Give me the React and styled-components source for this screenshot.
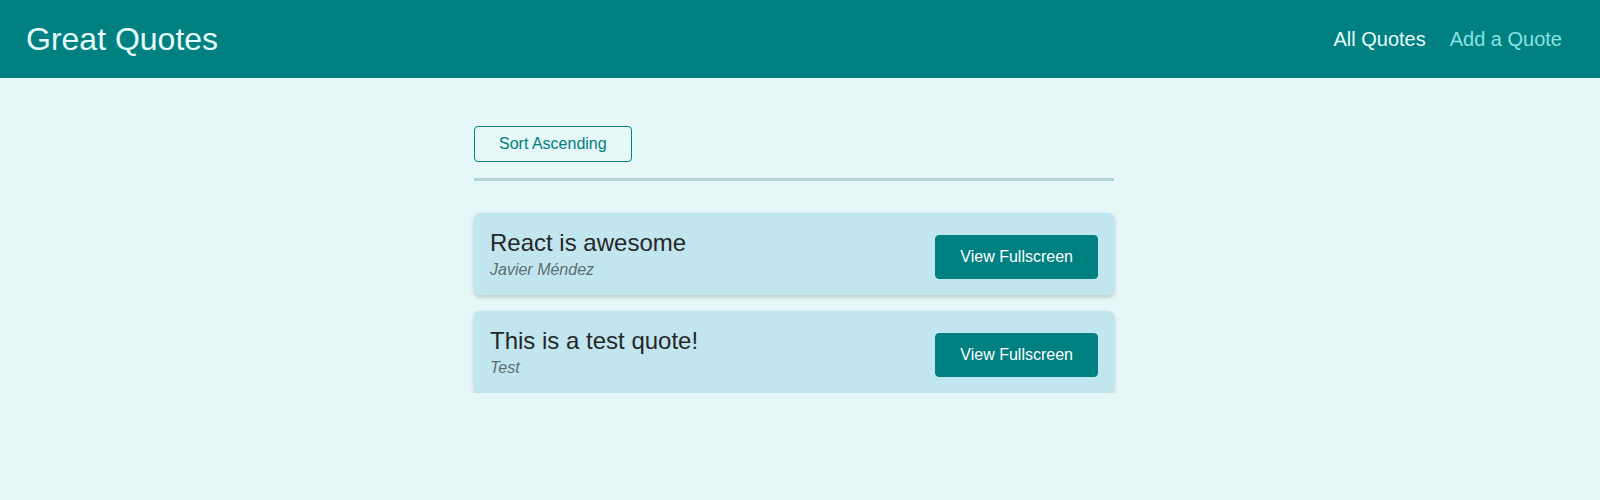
import React from 'react'
import styled, { createGlobalStyle } from 'styled-components'

const GlobalStyle = createGlobalStyle`
  * {
    box-sizing: border-box;
  }
  body {
    margin: 0;
    font-family: "Liberation Sans", Arial, sans-serif;
    background-color: #e6f7f7;
  }
`

const Header = styled.header`
  height: 78px;
  display: flex;
  align-items: center;
  justify-content: space-between;
  padding: 0 38px 0 26px;
  background-color: #008080;
`
const Logo = styled.div`
  font-size: 32px;
  color: #e6fcfc;
`
const NavList = styled.ul`
  list-style: none;
  margin: 0;
  padding: 0;
  display: flex;
  align-items: center;
  gap: 24px;
`
const NavLink = styled.a`
  font-size: 20px;
  text-decoration: none;
  color: ${(props) => (props.$active ? '#e6fcfc' : '#88e3e3')};
  cursor: pointer;
`

const Main = styled.main`
  width: 640px;
  margin: 48px 0 0 calc(50% - 326px);
`
const Sorting = styled.div`
  padding-bottom: 16px;
  border-bottom: 3px solid #b3d4d4;
`
const SortButton = styled.button`
  font: inherit;
  font-size: 16px;
  padding: 8px 24px;
  border: 1px solid #008080;
  border-radius: 4px;
  background-color: transparent;
  color: #008080;
  cursor: pointer;
`
const List = styled.ul`
  list-style: none;
  margin: 32px 0 0;
  padding: 0;
  display: flex;
  flex-direction: column;
  gap: 16px;
`
const Item = styled.li`
  display: flex;
  align-items: center;
  justify-content: space-between;
  padding: 16px;
  border-radius: 6px;
  background-color: #c1e6ef;
  box-shadow: 0 2px 4px rgba(0, 0, 0, 0.2);
`
const Figure = styled.figure`
  margin: 0;
`
const Quote = styled.blockquote`
  margin: 0;
  font-size: 24px;
  color: #272727;
`
const Author = styled.figcaption`
  margin-top: 4px;
  font-size: 16px;
  font-style: italic;
  color: #5f6e73;
`
const ViewButton = styled.a`
  margin-top: 6px;
  font-size: 16px;
  padding: 12px 24px;
  border: 1px solid #008080;
  border-radius: 4px;
  background-color: #008080;
  color: #ffffff;
  text-decoration: none;
  cursor: pointer;
`

const quotes = [
  { id: 'q1', text: 'React is awesome', author: 'Javier Méndez' },
  { id: 'q2', text: 'This is a test quote!', author: 'Test' },
]

export default function App() {
  return (
    <>
      <GlobalStyle />
      <Header>
        <Logo>Great Quotes</Logo>
        <nav>
          <NavList>
            <li><NavLink $active>All Quotes</NavLink></li>
            <li><NavLink>Add a Quote</NavLink></li>
          </NavList>
        </nav>
      </Header>
      <Main>
        <Sorting>
          <SortButton>Sort Ascending</SortButton>
        </Sorting>
        <List>
          {quotes.map((q) => (
            <Item key={q.id}>
              <Figure>
                <Quote>{q.text}</Quote>
                <Author>{q.author}</Author>
              </Figure>
              <ViewButton>View Fullscreen</ViewButton>
            </Item>
          ))}
        </List>
      </Main>
    </>
  )
}
